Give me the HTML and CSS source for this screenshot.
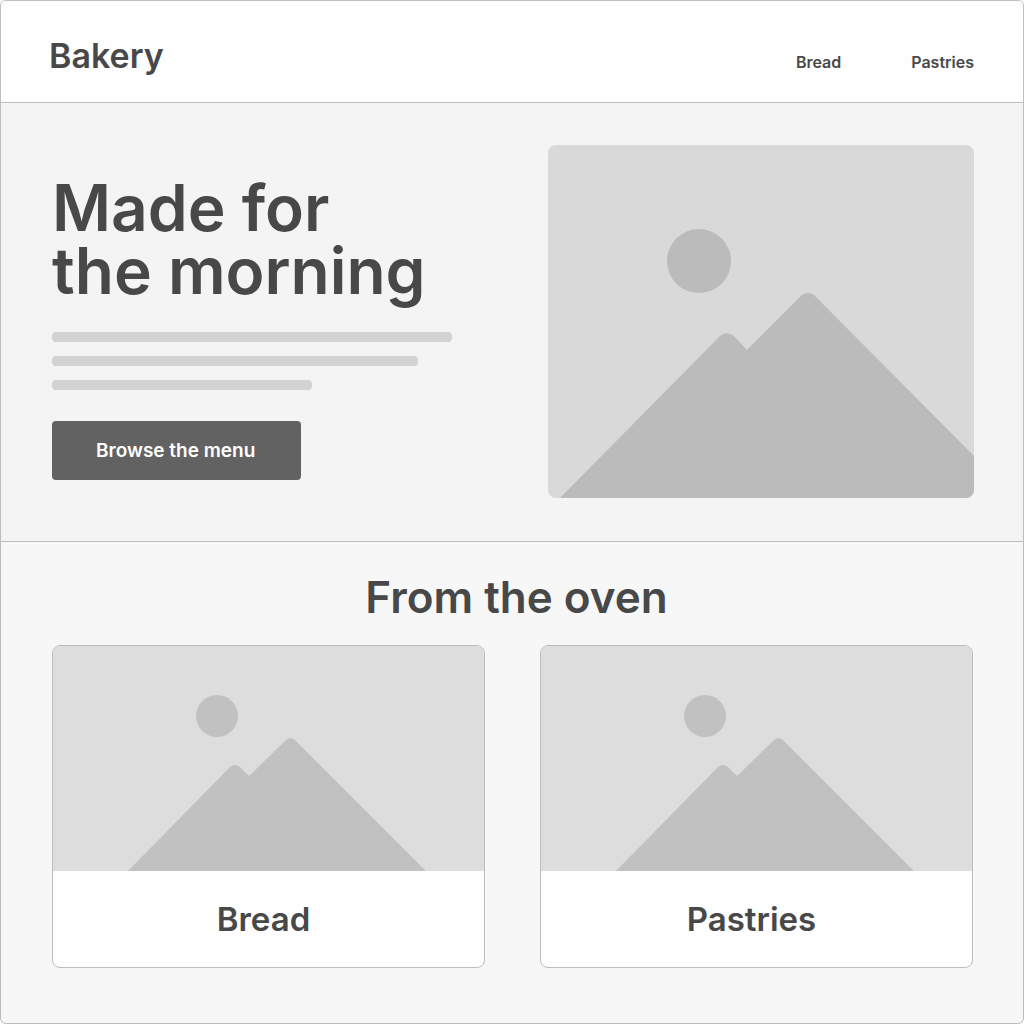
FILE: index.html
```
<!DOCTYPE html>
<html lang="en">
<head>
  <meta charset="UTF-8" />
  <meta name="viewport" content="width=device-width, initial-scale=1.0"/>
  <title>Bakery</title>
  <link rel="stylesheet" href="styles.css">
</head>
<body>
  <div class="page">
    <header class="header">
      <div class="logo">Bakery</div>
      <nav class="nav">
        <a href="#bread">Bread</a>
        <a href="#pastries">Pastries</a>
      </nav>
    </header>

    <section class="hero">
      <div class="hero-text">
        <h1>Made for<br>the morning</h1>
        <div class="lines">
          <span class="line"></span>
          <span class="line line-medium"></span>
          <span class="line line-short"></span>
        </div>
        <button class="menu-button" type="button">Browse the menu</button>
      </div>
      <svg class="hero-image" viewBox="0 0 426 353" aria-hidden="true">
        <circle cx="151" cy="116" r="32"/>
        <path d="M12 353 L171 192 Q178 185 186 191 L199 205 L252 152 Q260 144 268 152 L426 311 V353 Z"/>
      </svg>
    </section>

    <section class="oven">
      <h2>From the oven</h2>
      <div class="cards">
        <article class="card" id="bread">
          <svg class="card-image" viewBox="0 0 431 225" aria-hidden="true">
            <circle cx="164" cy="70" r="21"/>
            <path d="M75 225 L177 121 Q182 117 187 121 L196 130 L233 94 Q237 90 242 94 L373 225 Z"/>
          </svg>
          <h3>Bread</h3>
        </article>
        <article class="card" id="pastries">
          <svg class="card-image" viewBox="0 0 431 225" aria-hidden="true">
            <circle cx="164" cy="70" r="21"/>
            <path d="M75 225 L177 121 Q182 117 187 121 L196 130 L233 94 Q237 90 242 94 L373 225 Z"/>
          </svg>
          <h3>Pastries</h3>
        </article>
      </div>
    </section>
  </div>
</body>
</html>
```

FILE: styles.css
```
* {
  box-sizing: border-box;
}

body {
  margin: 0;
  font-family: Inter, "Liberation Sans", sans-serif;
  background-color: #f7f7f7;
  color: #484848;
}

h1, h2, h3 {
  margin: 0;
  font-weight: 600;
}

.page {
  min-height: 100vh;
  border: 1px solid #bdbdbd;
  border-radius: 6px;
  overflow: hidden;
}

.header {
  display: flex;
  justify-content: space-between;
  align-items: baseline;
  padding: 35px 49px 26px 48px;
  background-color: #fefefe;
  border-bottom: 1px solid #bdbdbd;
}

.logo {
  font-size: 34px;
  line-height: 40px;
  font-weight: 600;
}

.nav {
  display: flex;
  gap: 70px;
}

.nav a {
  font-size: 16px;
  font-weight: 600;
  color: #484848;
  text-decoration: none;
}

.hero {
  display: grid;
  grid-template-columns: 1fr 1fr;
  gap: 70px;
  align-items: start;
  padding: 42px 49px 43px 51px;
  background-color: #f4f4f4;
  border-bottom: 1px solid #bdbdbd;
}

.hero-text {
  padding-top: 31px;
}

h1 {
  font-size: 64px;
  line-height: 63px;
}

.lines {
  display: flex;
  flex-direction: column;
  gap: 14px;
  margin: 30px 0 31px;
}

.line {
  width: 94%;
  height: 10px;
  border-radius: 4px;
  background-color: #d3d3d3;
}

.line-medium {
  width: 86%;
}

.line-short {
  width: 61%;
}

.menu-button {
  padding: 18px 46px 18px 44px;
  border: 0;
  border-radius: 4px;
  background-color: #626262;
  color: #fefefe;
  font-family: inherit;
  font-size: 19px;
  line-height: 23px;
  font-weight: 600;
}

.hero-image {
  display: block;
  width: 100%;
  border-radius: 8px;
  background-color: #d9d9d9;
  fill: #bbbbbb;
}

.oven {
  padding: 31px 50px 55px 51px;
}

h2 {
  padding-left: 8px;
  font-size: 44px;
  line-height: 48px;
  text-align: center;
}

.cards {
  display: grid;
  grid-template-columns: 1fr 1fr;
  gap: 55px;
  margin-top: 24px;
}

.card {
  border: 1px solid #bdbdbd;
  border-radius: 8px;
  background-color: #fefefe;
  overflow: hidden;
}

.card-image {
  display: block;
  width: 100%;
  background-color: #dddddd;
  fill: #c1c1c1;
}

h3 {
  padding: 28px 10px 28px 0;
  font-size: 33px;
  line-height: 40px;
  text-align: center;
}
```
